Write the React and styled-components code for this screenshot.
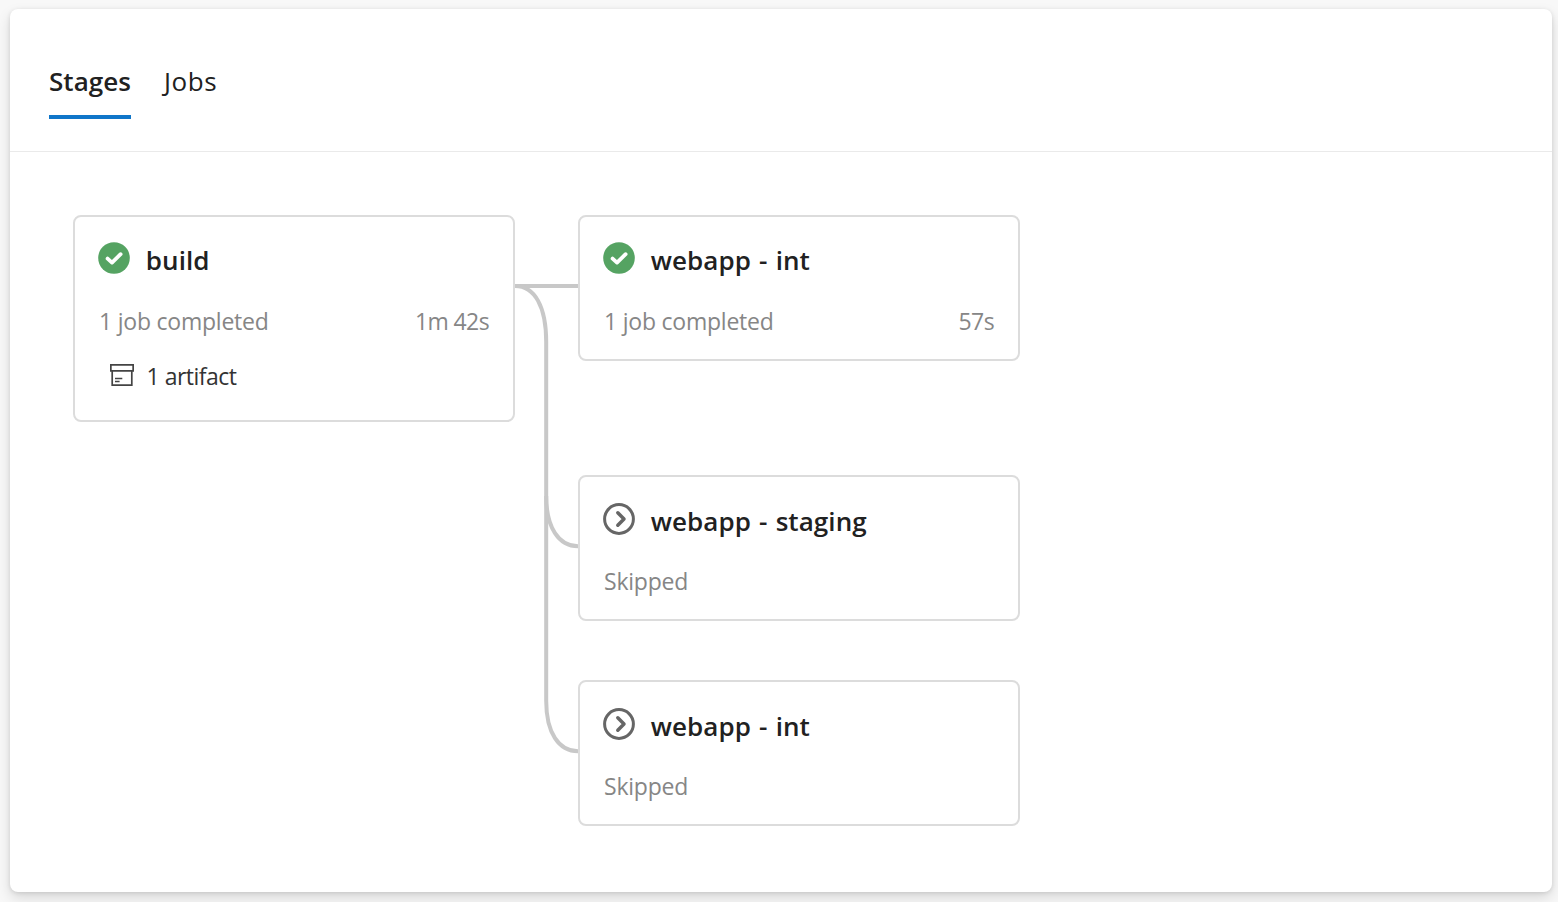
import React from "react";
import styled, { createGlobalStyle } from "styled-components";

const GlobalStyle = createGlobalStyle`
  * { box-sizing: border-box; }
  body {
    margin: 0;
    background: #f8f8f8;
    color: #212121;
    font-family: "Segoe UI", "Open Sans", "Noto Sans", sans-serif;
    overflow: hidden;
  }
`;

const Page = styled.main`
  height: 902px;
  padding: 9px 6px 10px 10px;
`;

const Panel = styled.section`
  height: 883px;
  background: #fff;
  border-radius: 8px;
  box-shadow: 0 6px 14px rgba(0, 0, 0, 0.13), 0 1px 4px rgba(0, 0, 0, 0.11);
`;

const TabBar = styled.nav`
  display: flex;
  gap: 33px;
  height: 143px;
  padding: 48px 39px 0;
  border-bottom: 1px solid #eaeaea;
`;

const Tab = styled.div`
  height: 62px;
  padding-top: 7px;
  font-size: 26px;
  line-height: 35px;
  white-space: nowrap;
  width: ${(p) => p.$width}px;
  letter-spacing: ${(p) => p.$spacing}px;
  font-weight: ${(p) => (p.$active ? 600 : 400)};
  border-bottom: 4px solid ${(p) => (p.$active ? "#0f76c9" : "transparent")};
`;

const Graph = styled.div`
  display: flex;
  align-items: flex-start;
  padding: 63px;
`;

const StageColumn = styled.div`
  display: flex;
  flex-direction: column;
  width: 442px;
`;

const Card = styled.article`
  height: ${(p) => p.$height}px;
  margin-top: ${(p) => p.$offset || 0}px;
  padding: 22px 24px 0;
  border: 2px solid #dcdcdc;
  border-radius: 8px;
  background: #fff;
`;

const CardHeader = styled.header`
  display: flex;
  align-items: center;
  gap: 15.5px;
  height: ${(p) => (p.$lowered ? 42 : 40)}px;
  margin: 0 0 ${(p) => (p.$lowered ? 24 : 26)}px -0.7px;
`;

const StatusIcon = styled.svg`
  width: 32px;
  height: 32px;
  flex: none;
  margin-top: -1.4px;
`;

const Title = styled.h2`
  margin: 2px 0 0;
  font-size: 26px;
  line-height: 36px;
  font-weight: 600;
  white-space: pre;
  word-spacing: 1.3px;
  letter-spacing: 0.06px;
`;

const Summary = styled.div`
  display: flex;
  justify-content: space-between;
  font-size: 23px;
  line-height: 32px;
  color: #868686;
`;

const Label = styled.span`
  white-space: nowrap;
  letter-spacing: ${(p) => p.$spacing || 0}px;
`;

const Artifact = styled.div`
  display: flex;
  align-items: center;
  gap: 12.5px;
  height: 32px;
  margin-top: 23px;
  padding-left: 11px;
  font-size: 23px;
  line-height: 32px;
  color: #333;
`;

const ArtifactSvg = styled.svg`
  width: 24px;
  height: 22px;
  margin-top: -3px;
`;

const Connectors = styled.svg`
  width: 63px;
  height: 611px;
  flex: none;
`;

const SuccessIcon = () => (
  <StatusIcon viewBox="0 0 32 32">
    <circle cx="16" cy="16" r="15.8" fill="#55a362" />
    <path d="M9.6 16.6 14 20.6 22.6 12.2" fill="none" stroke="#fff" strokeWidth="3.8" strokeLinecap="round" strokeLinejoin="round" />
  </StatusIcon>
);

const SkippedIcon = () => (
  <StatusIcon viewBox="0 0 32 32" fill="none" stroke="#666">
    <circle cx="16" cy="16" r="14.4" strokeWidth="3" />
    <path d="M14.8 9.8 21 16 14.8 22.2" strokeWidth="3.5" strokeLinecap="round" strokeLinejoin="round" />
  </StatusIcon>
);

const ArtifactIcon = () => (
  <ArtifactSvg viewBox="0 0 24 22" fill="none" stroke="#444" strokeWidth="1.7">
    <path d="M.85.85h22.3v6H.85zM2.2 6.85v14.2h19.6V6.85M5 14.5h7.3M5 17.5h4.6" />
  </ArtifactSvg>
);

const stages = [
  { name: "webapp - int", done: true, label: "1 job completed", time: "57s", offset: 0 },
  { name: "webapp - staging", label: "Skipped", offset: 114 },
  { name: "webapp - int", label: "Skipped", offset: 59 },
];

const Stage = ({ name, done, label, time, height = 146, offset, children }) => (
  <Card $height={height} $offset={offset}>
    <CardHeader $lowered={!done}>
      {done ? <SuccessIcon /> : <SkippedIcon />}
      <Title>{name}</Title>
    </CardHeader>
    <Summary>
      <Label $spacing={-0.22}>{label}</Label>
      {time && <Label $spacing={-0.6}>{time}</Label>}
    </Summary>
    {children}
  </Card>
);

export default function App() {
  return (
    <>
      <GlobalStyle />
      <Page>
        <Panel>
          <TabBar>
            <Tab $active $width={82} $spacing={0.05}>Stages</Tab>
            <Tab $width={56} $spacing={0.6}>Jobs</Tab>
          </TabBar>
          <Graph>
            <StageColumn>
              <Stage name="build" done label="1 job completed" time="1m 42s" height={207}>
                <Artifact>
                  <ArtifactIcon />
                  <Label $spacing={-0.5}>1 artifact</Label>
                </Artifact>
              </Stage>
            </StageColumn>
            <Connectors viewBox="0 0 63 611" fill="none" stroke="#c8c8c8" strokeWidth="4">
              <path d="M0 71H63" />
              <path d="M0 71C20 71 31.2 92 31.2 127V281C31.2 313 44 331.3 63 331.3" />
              <path d="M31.2 281V486C31.2 518 44 536.3 63 536.3" />
            </Connectors>
            <StageColumn>
              {stages.map((stage, i) => <Stage key={i} {...stage} />)}
            </StageColumn>
          </Graph>
        </Panel>
      </Page>
    </>
  );
}
